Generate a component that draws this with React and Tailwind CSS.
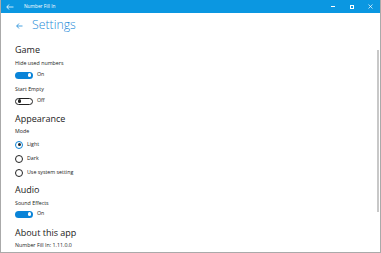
import React from "react";

function ToggleOn() {
  return (
    <div className="flex items-center gap-[4px]">
      <div className="w-[18px] h-[7px] rounded-full bg-[#0a84d8] flex items-center justify-end pr-[2px]">
        <div className="w-[3.5px] h-[3.5px] rounded-full bg-white" />
      </div>
      <span className="text-[5.3px] text-[#222]">On</span>
    </div>
  );
}

function ToggleOff() {
  return (
    <div className="flex items-center gap-[4px]">
      <div className="w-[18px] h-[7px] rounded-full border-[0.8px] border-[#222] flex items-center justify-start pl-[1.5px]">
        <div className="w-[3.5px] h-[3.5px] rounded-full bg-[#222]" />
      </div>
      <span className="text-[5.3px] text-[#222]">Off</span>
    </div>
  );
}

function Radio({ checked, label, className }) {
  return (
    <div className={"flex items-center gap-[4px] h-[13px] " + className}>
      <div
        className={
          "w-[8px] h-[8px] rounded-full border-[0.8px] flex items-center justify-center " +
          (checked ? "border-[#0a84d8]" : "border-[#222]")
        }
      >
        {checked && <div className="w-[3px] h-[3px] rounded-full bg-[#222]" />}
      </div>
      <span className="text-[5.3px] text-[#222]">{label}</span>
    </div>
  );
}

export default function App() {
  return (
    <div
      className="w-[381px] h-[253px] bg-white relative overflow-hidden border-l border-r border-b border-[#aaaaaa]"
      style={{ fontFamily: '"Open Sans", "Noto Sans", sans-serif' }}
    >
      <div className="h-[13px] bg-[#0b97e1] flex items-center text-white">
        <svg width="8" height="6" viewBox="0 0 8 6" className="ml-[5px]">
          <path d="M3 0.5 L0.8 3 L3 5.5 M0.8 3 H7.5" stroke="white" strokeWidth="0.8" fill="none" />
        </svg>
        <span className="ml-[10px] text-[4.8px]">Number Fill In</span>
        <div className="ml-auto flex items-center">
          <div className="w-[19px] flex justify-center">
            <div className="w-[4px] h-[0.7px] bg-white" />
          </div>
          <div className="w-[19px] flex justify-center">
            <div className="w-[4px] h-[4px] border-[0.7px] border-white" />
          </div>
          <div className="w-[19px] flex justify-center">
            <svg width="5" height="5" viewBox="0 0 5 5">
              <path d="M0.5 0.5 L4.5 4.5 M4.5 0.5 L0.5 4.5" stroke="white" strokeWidth="0.7" />
            </svg>
          </div>
        </div>
      </div>

      <div className="pl-[14px]">
        <div className="h-[25px] flex items-center">
          <svg width="7" height="6" viewBox="0 0 7 6" className="ml-[1px]">
            <path d="M3 0.5 L0.7 3 L3 5.5 M0.7 3 H6.5" stroke="#1a8ad8" strokeWidth="0.8" fill="none" />
          </svg>
          <span className="ml-[9px] text-[12.3px] font-light text-[#1a8ad8] leading-none">Settings</span>
        </div>

        <div className="mt-[5px] h-[14px] flex items-center text-[9px] text-[#222]">Game</div>
        <div className="mt-[2px] h-[10px] flex items-center text-[5.3px] text-[#222]">Hide used numbers</div>
        <div className="mt-[1px] h-[10px] flex items-center"><ToggleOn /></div>
        <div className="mt-[5px] h-[10px] flex items-center text-[5.3px] text-[#222]">Start Empty</div>
        <div className="mt-[1px] h-[10px] flex items-center"><ToggleOff /></div>

        <div className="mt-[6px] h-[14px] flex items-center text-[9px] text-[#222]">Appearance</div>
        <div className="mt-[1px] h-[10px] flex items-center text-[5.3px] text-[#222]">Mode</div>
        <Radio checked label="Light" className="mt-[1px]" />
        <Radio label="Dark" className="mt-[1px]" />
        <Radio label="Use system setting" className="mt-[1px]" />

        <div className="mt-[4px] h-[14px] flex items-center text-[9px] text-[#222]">Audio</div>
        <div className="mt-[2px] h-[10px] flex items-center text-[5.3px] text-[#222]">Sound Effects</div>
        <div className="h-[10px] flex items-center"><ToggleOn /></div>

        <div className="mt-[7px] h-[14px] flex items-center text-[9px] text-[#222]">About this app</div>
        <div className="mt-[1px] h-[10px] flex items-center text-[5.3px] text-[#222]">Number Fill In: 1.11.0.0</div>
      </div>

      <div className="absolute right-[1px] top-[50px] w-[2px] h-[162px] bg-[#c8c8c8]" />
    </div>
  );
}
